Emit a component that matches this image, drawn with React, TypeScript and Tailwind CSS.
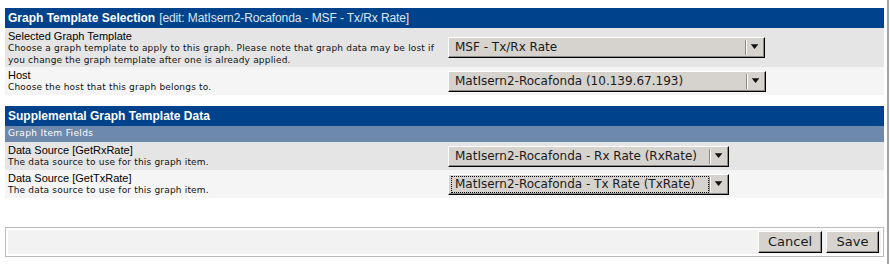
import React from 'react';

const dejavu = { fontFamily: '"DejaVu Sans", Verdana, sans-serif' };
const arial = { fontFamily: '"Liberation Sans", Arial, sans-serif' };

interface SelectProps {
  value: string;
  className?: string;
  focused?: boolean;
}

const Select: React.FC<SelectProps> = ({ value, className = '', focused = false }) => (
  <div
    className={`flex h-[21px] items-stretch bg-[#d6d3cf] border-t border-l border-t-white border-l-white border-b border-r border-b-black border-r-black shadow-[inset_-1px_-1px_0_#8c8a88] ${className}`}
  >
    <div className="flex flex-1 items-center pl-[3px] pr-[2px] min-w-0">
      <span
        className={`flex-1 pl-[3px] whitespace-nowrap text-[12px] leading-[15px] text-[#1a1a1a] ${focused ? 'outline-1 outline-dotted outline-black' : ''}`}
        style={dejavu}
      >
        {value}
      </span>
    </div>
    <div className="flex w-[18px] items-center border-l border-l-white shadow-[-1px_0_0_#8c8a88] my-[2px]">
      <svg width="18" height="8" viewBox="0 0 18 8" className="-mt-[1px]">
        <polygon points="4,1 12,1 8,6" fill="#111" />
      </svg>
    </div>
  </div>
);

interface RowProps {
  title: string;
  desc: string[];
  bg: string;
  height: string;
  children: React.ReactNode;
}

const Row: React.FC<RowProps> = ({ title, desc, bg, height, children }) => (
  <div className={`flex items-center ${bg} ${height}`}>
    <div className="w-[443px] pl-[3px] flex flex-col">
      <div className="text-[11px] leading-[12px] text-black" style={arial}>{title}</div>
      {desc.map(d => (
        <div key={d} className="text-[9px] leading-[12px] tracking-[0.18px] text-[#111]" style={dejavu}>{d}</div>
      ))}
    </div>
    <div className="flex-1">{children}</div>
  </div>
);

const Header: React.FC<{ children: React.ReactNode }> = ({ children }) => (
  <div className="flex h-[20px] items-center bg-[#00438c] pl-[3px] text-white text-[12px]" style={arial}>
    {children}
  </div>
);

const Btn: React.FC<{ label: string; className?: string }> = ({ label, className = '' }) => (
  <div
    className={`flex h-[22px] items-center justify-center bg-[#d6d3cf] border-t border-l border-t-white border-l-white border-b border-r border-b-black border-r-black shadow-[inset_-1px_-1px_0_#8c8a88] text-[13px] text-[#1a1a1a] ${className}`}
    style={dejavu}
  >
    {label}
  </div>
);

export default function App() {
  return (
    <div className="w-[890px] h-[264px] bg-white overflow-hidden">
      <div className="w-[889px] h-[264px] border-r-2 border-r-[#a3a3a3] pl-[5px] pr-[3px] pt-[8px]">
        <Header>
          <span className="font-bold">Graph Template Selection</span>
          <span className="ml-[4px] text-[#dfe6f0] tracking-[-0.1px]">[edit: MatIsern2-Rocafonda - MSF - Tx/Rx Rate]</span>
        </Header>
        <Row
          title="Selected Graph Template"
          desc={[
            'Choose a graph template to apply to this graph. Please note that graph data may be lost if',
            'you change the graph template after one is already applied.',
          ]}
          bg="bg-[#e5e5e5]"
          height="h-[39px]"
        >
          <Select value="MSF - Tx/Rx Rate" className="w-[317px]" />
        </Row>
        <Row
          title="Host"
          desc={['Choose the host that this graph belongs to.']}
          bg="bg-[#f5f5f5]"
          height="h-[28px]"
        >
          <Select value="MatIsern2-Rocafonda (10.139.67.193)" className="w-[318px]" />
        </Row>

        <div className="mt-[11px]">
          <Header>
            <span className="font-bold">Supplemental Graph Template Data</span>
          </Header>
          <div className="flex h-[16px] items-center bg-[#6d89ab] pl-[3px] text-white text-[9px] tracking-[0.35px]" style={dejavu}>
            Graph Item Fields
          </div>
          <Row
            title="Data Source [GetRxRate]"
            desc={['The data source to use for this graph item.']}
            bg="bg-[#e5e5e5]"
            height="h-[28px]"
          >
            <Select value="MatIsern2-Rocafonda - Rx Rate (RxRate)" className="w-[281px]" />
          </Row>
          <Row
            title="Data Source [GetTxRate]"
            desc={['The data source to use for this graph item.']}
            bg="bg-[#f5f5f5]"
            height="h-[28px]"
          >
            <Select value="MatIsern2-Rocafonda - Tx Rate (TxRate)" className="w-[281px]" focused />
          </Row>
        </div>

        <div className="mt-[29px] h-[30px] border border-[#bbbbbb] p-[2px]">
          <div className="flex h-full items-center justify-end gap-[4px] bg-[#f2f2f2] pr-[2px]">
            <Btn label="Cancel" className="w-[64px]" />
            <Btn label="Save" className="w-[53px]" />
          </div>
        </div>
      </div>
    </div>
  );
}
